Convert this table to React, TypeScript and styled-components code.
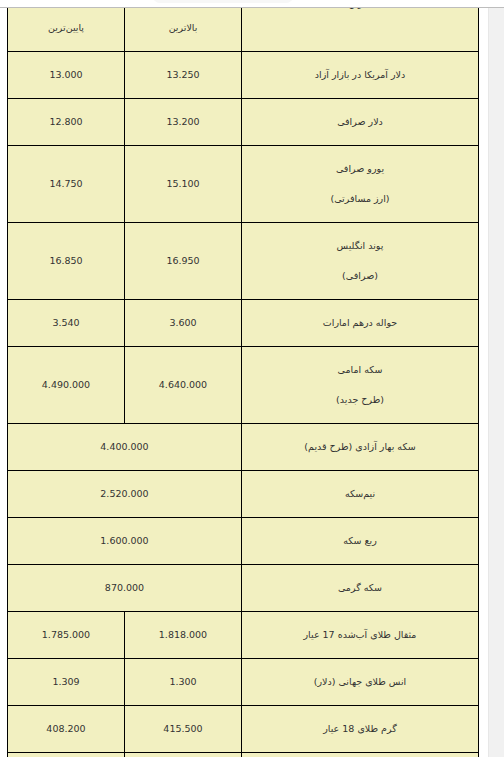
import React from "react";
import styled, { createGlobalStyle } from "styled-components";

const GlobalStyle = createGlobalStyle`
  html, body {
    margin: 0;
    padding: 0;
    background: #ffffff;
    overflow: hidden;
  }
`;

const Page = styled.div`
  display: flex;
  height: 757px;
  overflow: hidden;
`;

const Content = styled.div`
  flex: 1;
  padding: 4px 0 0 7px;
  overflow: hidden;
`;

const ScrollTrack = styled.div`
  width: 15px;
  background: #f1f1f1;
  border-left: 1px solid #e7e7e7;
`;

const TopBar = styled.div`
  position: fixed;
  top: 0;
  left: 0;
  right: 0;
  height: 7px;
  background: #ffffff;
  border-bottom: 1px solid #bdbdbd;
  overflow: hidden;
`;

const TopBlob = styled.div`
  position: absolute;
  top: -10px;
  left: 153px;
  width: 140px;
  height: 13px;
  border-radius: 8px;
  background: #f7f7f7;
`;

const Table = styled.table`
  width: 472px;
  border-collapse: collapse;
  table-layout: fixed;
  background: #f2f0c1;
  color: #333333;
  font-family: "DejaVu Sans", "Noto Sans", sans-serif;
`;

const NameCol = styled.col`
  width: 237px;
`;

const NumCol = styled.col`
  width: 117px;
`;

const Cell = styled.td<{ $num?: boolean }>`
  border: 1px solid #000000;
  padding: 8px 4px;
  text-align: center;
  vertical-align: middle;
  line-height: 30px;
  font-size: ${(p) => (p.$num ? "9.5px" : "9.5px")};
  white-space: nowrap;
`;

const HeadNameCell = styled(Cell)`
  vertical-align: top;
  padding-top: 0;
`;

const HeadLabel = styled.span`
  display: block;
  margin-top: -9px;
  line-height: 16px;
`;

type Row = {
  name: string;
  sub?: string;
  high: string;
  low?: string;
};

const rows: Row[] = [
  { name: "دلار آمریکا در بازار آزاد", high: "13.250", low: "13.000" },
  { name: "دلار صرافی", high: "13.200", low: "12.800" },
  { name: "یورو صرافی", sub: "(ارز مسافرتی)", high: "15.100", low: "14.750" },
  { name: "پوند انگلیس", sub: "(صرافی)", high: "16.950", low: "16.850" },
  { name: "حواله درهم امارات", high: "3.600", low: "3.540" },
  { name: "سکه امامی", sub: "(طرح جدید)", high: "4.640.000", low: "4.490.000" },
  { name: "سکه بهار آزادی (طرح قدیم)", high: "4.400.000" },
  { name: "نیم‌سکه", high: "2.520.000" },
  { name: "ربع سکه", high: "1.600.000" },
  { name: "سکه گرمی", high: "870.000" },
  { name: "مثقال طلای آب‌شده 17 عیار", high: "1.818.000", low: "1.785.000" },
  { name: "انس طلای جهانی (دلار)", high: "1.300", low: "1.309" },
  { name: "گرم طلای 18 عیار", high: "415.500", low: "408.200" },
  { name: "گرم طلای 24 عیار", high: "554.000", low: "544.200" },
];

export default function App() {
  return (
    <>
      <GlobalStyle />
      <Page>
        <Content>
          <Table dir="rtl">
            <colgroup>
              <NameCol />
              <NumCol />
              <NumCol />
            </colgroup>
            <tbody>
              <tr>
                <HeadNameCell>
                  <HeadLabel>عنوان</HeadLabel>
                </HeadNameCell>
                <Cell>بالاترین</Cell>
                <Cell>پایین‌ترین</Cell>
              </tr>
              {rows.map((r) => (
                <tr key={r.name}>
                  <Cell>
                    {r.name}
                    {r.sub && (
                      <>
                        <br />
                        {r.sub}
                      </>
                    )}
                  </Cell>
                  {r.low ? (
                    <>
                      <Cell $num>{r.high}</Cell>
                      <Cell $num>{r.low}</Cell>
                    </>
                  ) : (
                    <Cell $num colSpan={2}>
                      {r.high}
                    </Cell>
                  )}
                </tr>
              ))}
            </tbody>
          </Table>
        </Content>
        <ScrollTrack />
      </Page>
      <TopBar>
        <TopBlob />
      </TopBar>
    </>
  );
}
